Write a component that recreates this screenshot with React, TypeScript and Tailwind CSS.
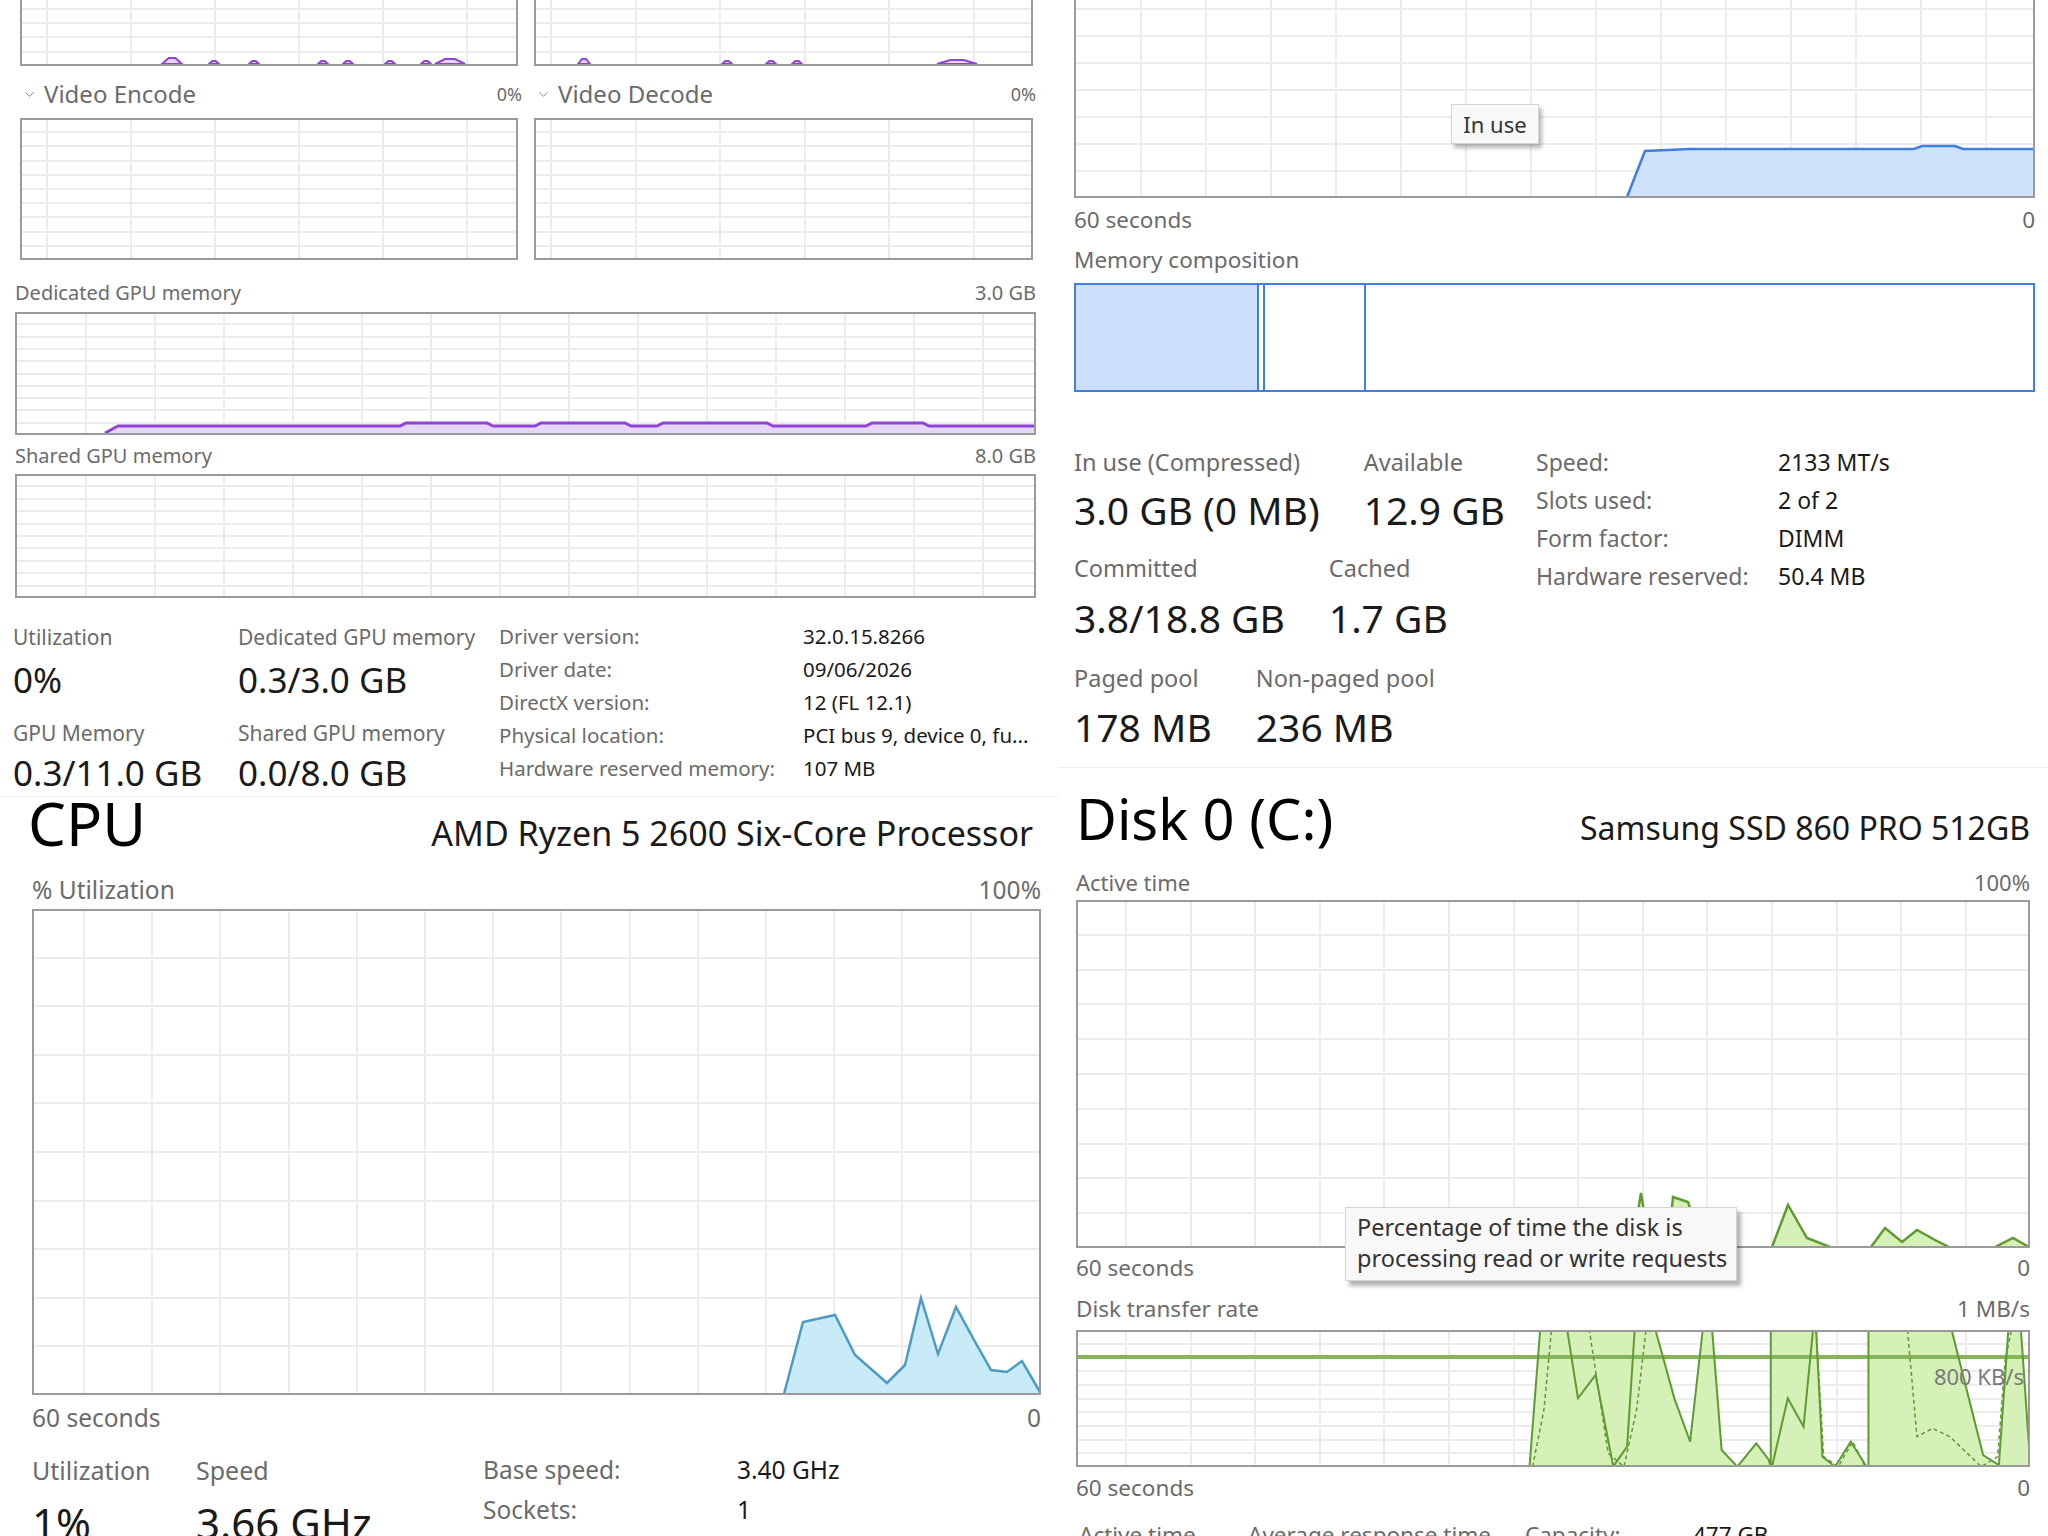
import React from "react";
import { ChevronDown } from "lucide-react";

type Pt = [number, number];

const pts = (p: Pt[]) => p.map(([x, y]) => `${x},${y}`).join(" ");

// closes a line down to the chart floor so it can be filled
const area = (p: Pt[], floor: number): Pt[] => [[p[0][0], floor], ...p, [p[p.length - 1][0], floor]];

// disk transfer chart was traced on a zoomed crop
const z = (p: Pt[]): Pt[] => p.map(([x, y]) => [x / 1.587 + 1060, y / 3 + 1310] as Pt);

type ChartProps = {
  className: string;
  w: number;
  h: number;
  x: number;
  y: number;
  off: number;
  step: number;
  rows?: number;
  children?: React.ReactNode;
  overlay?: React.ReactNode;
};

function Chart({ className, w, h, x, y, off, step, rows = 10, children, overlay }: ChartProps) {
  const cols: number[] = [];
  for (let c = off; c < w - 3; c += step) cols.push(Math.round(c));
  const lines: number[] = [];
  for (let r = 1; r < rows; r++) lines.push(Math.round((h * r) / rows));

  return (
    <div className={`relative shrink-0 ${className}`}>
      <svg width={w} height={h} className="block">
        {lines.map((ly) => (
          <line key={`h${ly}`} x1={0} x2={w} y1={ly} y2={ly} stroke="#ececec" strokeWidth={2} />
        ))}
        {cols.map((cx) => (
          <line key={`v${cx}`} x1={cx} x2={cx} y1={0} y2={h} stroke="#ececec" strokeWidth={2} />
        ))}
        <g transform={`translate(${-x} ${-y})`}>{children}</g>
        <rect x={1} y={1} width={w - 2} height={h - 2} fill="none" stroke="#9a9a9a" strokeWidth={2} />
      </svg>
      {overlay}
    </div>
  );
}

const PURPLE = "#8e44d6";
const PURPLE_FILL = "#e6d6f8";

function Blips({ items, floor }: { items: [number, number, number][]; floor: number }) {
  return (
    <>
      {items.map(([cx, hw, hh]) => (
        <polygon
          key={cx}
          points={pts([
            [cx - hw, floor],
            [cx - hw / 3, floor - hh],
            [cx + hw / 3, floor - hh],
            [cx + hw, floor],
          ])}
          fill={PURPLE_FILL}
          stroke={PURPLE}
          strokeWidth={2}
        />
      ))}
    </>
  );
}

const gpuDedicated: Pt[] = [
  [105, 433], [118, 426], [400, 426], [406, 423], [487, 423], [493, 426], [535, 426], [541, 423],
  [625, 423], [631, 426], [657, 426], [663, 423], [767, 423], [773, 426], [866, 426], [872, 423],
  [923, 423], [929, 426], [1035, 426],
];

const cpuLine: Pt[] = [
  [784, 1394], [803, 1322], [835, 1315], [855, 1355], [887, 1383], [905, 1365], [921, 1298],
  [938, 1354], [956, 1307], [974, 1340], [991, 1370], [1007, 1372], [1022, 1361], [1040, 1392],
];

const memLine: Pt[] = [
  [1627, 197], [1645, 151], [1690, 149], [1914, 149], [1922, 146], [1955, 146], [1963, 149], [2034, 149],
];

const diskSpikes: Pt[][] = [
  [[1632, 1247], [1641, 1193], [1650, 1247]],
  [[1668, 1247], [1673, 1197], [1688, 1202], [1702, 1247]],
  [[1772, 1247], [1788, 1205], [1807, 1238], [1830, 1247]],
  [[1871, 1247], [1885, 1228], [1902, 1242], [1917, 1230], [1935, 1240], [1949, 1247]],
  [[1995, 1247], [2013, 1238], [2029, 1247]],
];

const transferMax = z([
  [745, 472], [762, 60], [945, 60], [975, 265], [1000, 395], [1020, 60], [1035, 60], [1050, 420],
  [1075, 470], [1105, 400], [1125, 450], [1128, 472], [1128, 60], [1200, 60], [1210, 440], [1230, 470],
  [1255, 395], [1280, 470], [1283, 472], [1283, 60], [1415, 60], [1465, 435], [1490, 465], [1505, 60],
  [1525, 60], [1540, 470],
]);
const transferInner = z([[805, 60], [822, 265], [850, 195], [878, 470], [900, 410], [912, 60]]);
const transferInner2 = z([[1130, 470], [1155, 265], [1180, 350], [1195, 60]]);
const transferDash = z([
  [750, 470], [768, 300], [780, 60], [840, 60], [870, 430], [895, 470], [915, 300], [930, 60],
]);
const transferDash2 = z([[1200, 60], [1212, 440], [1235, 470], [1258, 395], [1278, 470]]);
const transferDash3 = z([
  [1345, 60], [1360, 380], [1385, 355], [1412, 380], [1440, 430], [1462, 470], [1488, 440], [1500, 150], [1510, 60],
]);

const GREEN = "#5f9a33";
const GREEN_FILL = "#d5f1b8";

export default function App() {
  return (
    <div className="w-[2048px] h-[1536px] overflow-hidden bg-white flex font-['Noto_Sans',sans-serif]">
      {/* left column: GPU + CPU */}
      <div className="w-[1058px] shrink-0 flex flex-col">
        <section className="h-[796px] shrink-0">
          <div className="flex gap-[16px] pl-[20px] -mt-[77px]">
            <Chart className="w-[498px] h-[143px]" w={498} h={143} x={20} y={-77} off={27} step={84}>
              <Blips
                floor={64}
                items={[[172, 10, 6], [214, 5, 3], [254, 5, 3], [323, 5, 3], [348, 5, 3], [390, 5, 3], [426, 5, 3], [450, 15, 5]]}
              />
            </Chart>
            <Chart className="w-[499px] h-[143px]" w={499} h={143} x={534} y={-77} off={17} step={84.5}>
              <Blips floor={64} items={[[584, 6, 5], [727, 5, 3], [771, 5, 3], [797, 5, 3], [957, 20, 4]]} />
            </Chart>
          </div>

          <div className="flex gap-[12px] pl-[20px] h-[52px] pt-[4px] items-center text-[#6b6b6b]">
            {["Video Encode", "Video Decode"].map((name) => (
              <div key={name} className="w-[502px] flex items-center">
                <ChevronDown size={15} strokeWidth={1.5} className="ml-[2px] mr-[7px] text-[#777]" />
                <span className="flex-1 text-[24px] leading-[24px]">{name}</span>
                <span className="text-[18px] leading-[24px]">0%</span>
              </div>
            ))}
          </div>

          <div className="flex gap-[16px] pl-[20px]">
            <Chart className="w-[498px] h-[142px]" w={498} h={142} x={20} y={118} off={27} step={84} />
            <Chart className="w-[499px] h-[142px]" w={499} h={142} x={534} y={118} off={17} step={84.5} />
          </div>

          <div className="ml-[15px] w-[1021px] h-[52px] flex items-end justify-between pb-[7px] text-[20px] leading-[24px] text-[#6b6b6b]">
            <span>Dedicated GPU memory</span>
            <span>3.0 GB</span>
          </div>
          <Chart className="ml-[15px] w-[1021px] h-[123px]" w={1021} h={123} x={15} y={312} off={71} step={69}>
            <polygon points={pts(area(gpuDedicated, 433))} fill={PURPLE_FILL} />
            <polyline points={pts(gpuDedicated)} fill="none" stroke={PURPLE} strokeWidth={3} />
          </Chart>

          <div className="ml-[15px] w-[1021px] h-[39px] flex items-end justify-between pb-[6px] text-[20px] leading-[24px] text-[#6b6b6b]">
            <span>Shared GPU memory</span>
            <span>8.0 GB</span>
          </div>
          <Chart className="ml-[15px] w-[1021px] h-[124px]" w={1021} h={124} x={15} y={474} off={71} step={69} />

          <div className="flex mt-[22px] pl-[13px] whitespace-nowrap">
            <div className="w-[225px]">
              <div className="h-[34px] leading-[34px] text-[21px] text-[#6b6b6b]">Utilization</div>
              <div className="h-[52px] leading-[52px] text-[35px] text-[#1a1a1a]">0%</div>
              <div className="h-[54px] leading-[54px] text-[21px] text-[#6b6b6b]">GPU Memory</div>
              <div className="h-[26px] leading-[26px] text-[35px] text-[#1a1a1a]">0.3/11.0 GB</div>
            </div>
            <div className="w-[261px]">
              <div className="h-[34px] leading-[34px] text-[21px] text-[#6b6b6b]">Dedicated GPU memory</div>
              <div className="h-[52px] leading-[52px] text-[35px] text-[#1a1a1a]">0.3/3.0 GB</div>
              <div className="h-[54px] leading-[54px] text-[21px] text-[#6b6b6b]">Shared GPU memory</div>
              <div className="h-[26px] leading-[26px] text-[35px] text-[#1a1a1a]">0.0/8.0 GB</div>
            </div>
            <div className="grid grid-cols-[304px_1fr] auto-rows-[33px] items-center text-[20.5px]">
              {[
                ["Driver version:", "32.0.15.8266"],
                ["Driver date:", "09/06/2026"],
                ["DirectX version:", "12 (FL 12.1)"],
                ["Physical location:", "PCI bus 9, device 0, fu..."],
                ["Hardware reserved memory:", "107 MB"],
              ].map(([k, v]) => (
                <React.Fragment key={k}>
                  <span className="text-[#6b6b6b]">{k}</span>
                  <span className="text-[#1a1a1a]">{v}</span>
                </React.Fragment>
              ))}
            </div>
          </div>
        </section>

        <section className="flex-1 border-t border-[#ededed]">
          <div className="ml-[28px] w-[1005px] h-[52px] flex items-baseline justify-between text-black whitespace-nowrap">
            <span className="text-[60px] leading-[52px]">CPU</span>
            <span className="text-[34px] leading-[52px] text-[#1a1a1a]">AMD Ryzen 5 2600 Six-Core Processor</span>
          </div>
          <div className="ml-[32px] w-[1009px] mt-[29px] h-[24px] flex justify-between text-[24.5px] leading-[24px] text-[#6b6b6b]">
            <span>% Utilization</span>
            <span>100%</span>
          </div>
          <Chart className="ml-[32px] mt-[7px] w-[1009px] h-[486px]" w={1009} h={486} x={32} y={909} off={52} step={68.2}>
            <polygon points={pts(area(cpuLine, 1394))} fill="#c9ebf8" />
            <polyline points={pts(cpuLine)} fill="none" stroke="#4d9bc5" strokeWidth={2.5} />
          </Chart>
          <div className="ml-[32px] w-[1009px] mt-[11px] h-[24px] flex justify-between text-[24.5px] leading-[24px] text-[#6b6b6b]">
            <span>60 seconds</span>
            <span>0</span>
          </div>
          <div className="ml-[32px] mt-[28px] flex whitespace-nowrap">
            <div className="w-[164px]">
              <div className="h-[24px] leading-[24px] text-[25px] text-[#6b6b6b]">Utilization</div>
              <div className="h-[82px] leading-[82px] text-[42px] text-[#1a1a1a]">1%</div>
            </div>
            <div className="w-[287px]">
              <div className="h-[24px] leading-[24px] text-[25px] text-[#6b6b6b]">Speed</div>
              <div className="h-[82px] leading-[82px] text-[42px] text-[#1a1a1a]">3.66 GHz</div>
            </div>
            <div className="grid grid-cols-[254px_1fr] auto-rows-[40px] -mt-[8px] items-center text-[24.5px]">
              <span className="text-[#6b6b6b]">Base speed:</span>
              <span className="text-[#1a1a1a]">3.40 GHz</span>
              <span className="text-[#6b6b6b]">Sockets:</span>
              <span className="text-[#1a1a1a]">1</span>
            </div>
          </div>
        </section>
      </div>

      {/* right column: Memory + Disk */}
      <div className="flex-1 flex flex-col">
        <section className="h-[767px] shrink-0 pl-[16px]">
          <Chart
            className="-mt-[72px] w-[961px] h-[270px]"
            w={961}
            h={270}
            x={1074}
            y={-72}
            off={67}
            step={65}
            overlay={
              <div className="absolute left-[377px] top-[176px] w-[88px] h-[40px] flex items-center justify-center bg-[#f8f8f8] border border-[#d4d4d4] shadow-[3px_4px_4px_rgba(0,0,0,0.28)] text-[22px] text-[#333]">
                In use
              </div>
            }
          >
            <polygon points={pts(area(memLine, 197))} fill="#cfe2fb" />
            <polyline points={pts(memLine)} fill="none" stroke="#3f80df" strokeWidth={2.5} />
          </Chart>
          <div className="w-[961px] mt-[10px] h-[24px] flex justify-between text-[22.5px] leading-[24px] text-[#6b6b6b]">
            <span>60 seconds</span>
            <span>0</span>
          </div>
          <div className="mt-[16px] h-[24px] text-[22.5px] leading-[24px] text-[#6b6b6b]">Memory composition</div>
          <div className="mt-[11px] w-[961px] h-[109px] flex border-2 border-[#3f80e2]">
            <div className="w-[183px] bg-[#cce0fb] border-r-2 border-[#3f80e2]" />
            <div className="w-[6px] border-r-2 border-[#3f80e2]" />
            <div className="w-[101px] border-r-2 border-[#3f80e2]" />
            <div className="flex-1" />
          </div>

          <div className="flex mt-[51px] whitespace-nowrap">
            <div className="w-[462px] pt-[7px]">
              <div className="flex gap-[44px]">
                <div>
                  <div className="h-[24px] leading-[24px] text-[23.5px] text-[#6b6b6b]">In use (Compressed)</div>
                  <div className="mt-[12px] h-[48px] leading-[48px] text-[39px] text-[#1a1a1a]">3.0 GB (0 MB)</div>
                </div>
                <div>
                  <div className="h-[24px] leading-[24px] text-[23.5px] text-[#6b6b6b]">Available</div>
                  <div className="mt-[12px] h-[48px] leading-[48px] text-[39px] text-[#1a1a1a]">12.9 GB</div>
                </div>
              </div>
              <div className="flex gap-[44px] mt-[22px]">
                <div>
                  <div className="h-[24px] leading-[24px] text-[23.5px] text-[#6b6b6b]">Committed</div>
                  <div className="mt-[14px] h-[48px] leading-[48px] text-[39px] text-[#1a1a1a]">3.8/18.8 GB</div>
                </div>
                <div>
                  <div className="h-[24px] leading-[24px] text-[23.5px] text-[#6b6b6b]">Cached</div>
                  <div className="mt-[14px] h-[48px] leading-[48px] text-[39px] text-[#1a1a1a]">1.7 GB</div>
                </div>
              </div>
              <div className="flex gap-[44px] mt-[24px]">
                <div>
                  <div className="h-[24px] leading-[24px] text-[23.5px] text-[#6b6b6b]">Paged pool</div>
                  <div className="mt-[13px] h-[48px] leading-[48px] text-[39px] text-[#1a1a1a]">178 MB</div>
                </div>
                <div>
                  <div className="h-[24px] leading-[24px] text-[23.5px] text-[#6b6b6b]">Non-paged pool</div>
                  <div className="mt-[13px] h-[48px] leading-[48px] text-[39px] text-[#1a1a1a]">236 MB</div>
                </div>
              </div>
            </div>
            <div className="grid grid-cols-[242px_1fr] auto-rows-[38px] items-center text-[23px] content-start">
              {[
                ["Speed:", "2133 MT/s"],
                ["Slots used:", "2 of 2"],
                ["Form factor:", "DIMM"],
                ["Hardware reserved:", "50.4 MB"],
              ].map(([k, v]) => (
                <React.Fragment key={k}>
                  <span className="text-[#6b6b6b]">{k}</span>
                  <span className="text-[#1a1a1a]">{v}</span>
                </React.Fragment>
              ))}
            </div>
          </div>
        </section>

        <section className="flex-1 border-t border-[#ededed] pl-[18px]">
          <div className="mt-[22px] w-[954px] h-[56px] flex items-baseline justify-between whitespace-nowrap">
            <span className="text-[56px] leading-[56px] text-black">Disk 0 (C:)</span>
            <span className="text-[32px] leading-[56px] text-[#1a1a1a]">Samsung SSD 860 PRO 512GB</span>
          </div>
          <div className="w-[954px] mt-[24px] h-[24px] flex justify-between text-[22px] leading-[24px] text-[#6b6b6b]">
            <span>Active time</span>
            <span>100%</span>
          </div>
          <Chart
            className="mt-[6px] w-[954px] h-[348px]"
            w={954}
            h={348}
            x={1076}
            y={900}
            off={50}
            step={64.6}
            overlay={
              <div className="absolute left-[269px] top-[307px] w-[392px] h-[74px] px-[11px] pt-[4px] bg-[#f8f8f8] border border-[#d4d4d4] shadow-[4px_5px_4px_rgba(0,0,0,0.3)] text-[23.5px] leading-[31px] text-[#333] whitespace-nowrap">
                <div>Percentage of time the disk is</div>
                <div>processing read or write requests</div>
              </div>
            }
          >
            {diskSpikes.map((s, i) => (
              <g key={i}>
                <polygon points={pts(s)} fill={GREEN_FILL} />
                <polyline points={pts(s)} fill="none" stroke={GREEN} strokeWidth={2.5} />
              </g>
            ))}
          </Chart>
          <div className="w-[954px] mt-[8px] h-[24px] flex justify-between text-[22.5px] leading-[24px] text-[#6b6b6b]">
            <span>60 seconds</span>
            <span>0</span>
          </div>
          <div className="w-[954px] mt-[17px] h-[24px] flex justify-between text-[22.5px] leading-[24px] text-[#6b6b6b]">
            <span>Disk transfer rate</span>
            <span>1 MB/s</span>
          </div>
          <Chart
            className="mt-[9px] w-[954px] h-[137px]"
            w={954}
            h={137}
            x={1076}
            y={1330}
            off={50}
            step={64.6}
            overlay={
              <span className="absolute right-[6px] top-[34px] text-[22px] leading-[24px] text-[#7a7a7a]">800 KB/s</span>
            }
          >
            <polygon points={pts(transferMax)} fill={GREEN_FILL} />
            <line x1={1076} x2={2030} y1={1357} y2={1357} stroke="#86b45a" strokeWidth={4} />
            <polyline points={pts(transferMax)} fill="none" stroke={GREEN} strokeWidth={2} />
            <polyline points={pts(transferInner)} fill="none" stroke={GREEN} strokeWidth={2} />
            <polyline points={pts(transferInner2)} fill="none" stroke={GREEN} strokeWidth={2} />
            <polyline points={pts(transferDash)} fill="none" stroke={GREEN} strokeWidth={1.5} strokeDasharray="4 3" />
            <polyline points={pts(transferDash2)} fill="none" stroke={GREEN} strokeWidth={1.5} strokeDasharray="4 3" />
            <polyline points={pts(transferDash3)} fill="none" stroke={GREEN} strokeWidth={1.5} strokeDasharray="4 3" />
          </Chart>
          <div className="w-[954px] mt-[9px] h-[24px] flex justify-between text-[22.5px] leading-[24px] text-[#6b6b6b]">
            <span>60 seconds</span>
            <span>0</span>
          </div>
          <div className="mt-[23px] h-[24px] flex text-[22.5px] leading-[24px] whitespace-nowrap">
            <span className="w-[172px] pl-[3px] text-[#6b6b6b]">Active time</span>
            <span className="w-[277px] text-[#6b6b6b]">Average response time</span>
            <span className="w-[168px] text-[#6b6b6b]">Capacity:</span>
            <span className="text-[#1a1a1a]">477 GB</span>
          </div>
        </section>
      </div>
    </div>
  );
}
